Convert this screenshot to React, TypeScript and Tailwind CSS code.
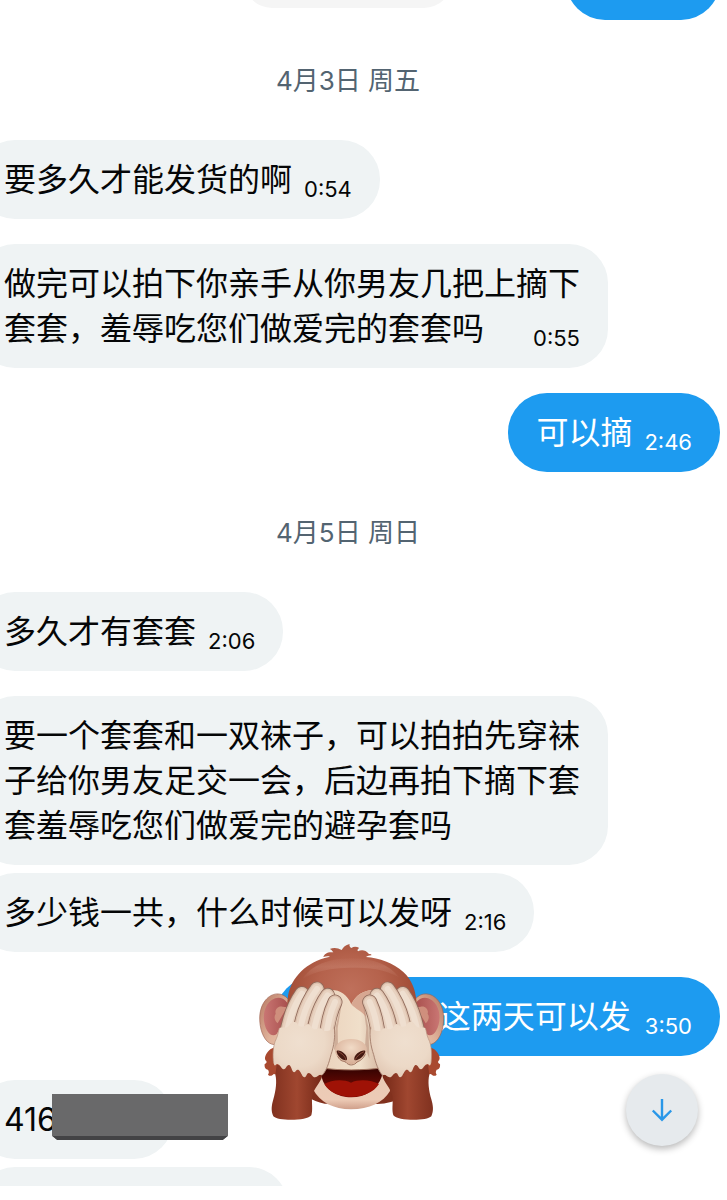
// App.tsx
import clsx from "clsx";
import type { ReactNode } from "react";

interface BubbleProps {
  mine?: boolean;
  time?: string;
  className?: string;
  children: ReactNode;
}

function Bubble({ mine, time, className, children }: BubbleProps) {
  return (
    <div className={clsx("relative flex", mine ? "justify-end" : "justify-start", className)}>
      <div
        className={clsx(
          "relative max-w-[632px] rounded-[39px] px-7 py-[17px] text-[32px] leading-[45px]",
          mine ? "bg-[#1d9bf0] text-white" : "bg-[#eff3f4] text-[#050607]"
        )}
      >
        {children}
        {time && (
          <time className="float-right ml-3 pt-5 text-[22px] leading-[25px]">{time}</time>
        )}
      </div>
    </div>
  );
}

function DateLabel({ children }: { children: ReactNode }) {
  return (
    <h2 className="flex h-[120px] items-center justify-center text-[26px] text-[#536471]">
      {children}
    </h2>
  );
}

const fingers = [
  "M189 191 C170 218 150 262 142 320",
  "M234 177 C212 206 190 250 182 310",
  "M266 196 C247 222 230 262 222 320",
  "M288 216 C274 246 264 280 262 330",
];

// one ear, hand and arm; the other side is its mirror
function MonkeySide() {
  return (
    <>
      <path d="M104 432 C100 438 92 440 87 434 C91 428 90 424 87 419 C78 418 76 410 77 402 C82 401 84 397 82 393 C74 388 78 372 94 358 L150 330 L150 440 Z" fill="#a9492f" />
      <path
        d="M113 404 C126 405 128 418 134 418 C143 417 141 402 151 405 C158 410 158 426 166 427 C172 426 171 415 180 421 C187 430 190 443 197 442 C203 440 203 427 210 429 C220 432 220 443 228 442 C238 437 239 430 250 436 C246 458 224 475 219 500 C218 520 222 540 217 556 C205 573 117 574 103 559 C95 542 98 525 103 508 C111 480 114 454 109 434 Z"
        fill="url(#arm)"
      />
      {fingers.map((d) => (
        <g key={d} fill="none" strokeLinecap="round">
          <path d={d} stroke="#8f6a5b" strokeWidth="45" />
          <path d={d} stroke="#dcc0ac" strokeWidth="40" />
          <path d={d} stroke="#e8d2c0" strokeWidth="32" />
          <path d={d} stroke="#efdfd0" strokeWidth="18" />
        </g>
      ))}
      <path
        d="M104 400 C101 378 101 347 112 326 C117 316 118 302 121 294 C128 288 141 300 152 284 C160 270 172 276 177 284 C184 294 196 290 206 282 C213 280 218 298 229 298 C238 296 244 290 254 302 C262 306 276 300 286 296 C289 320 285 348 276 374 C270 399 262 423 249 436 C240 431 237 441 228 442 C220 442 219 431 210 429 C203 428 203 440 197 442 C190 443 187 428 180 421 C172 416 171 426 166 427 C158 426 158 409 151 405 C142 403 143 417 134 418 C127 417 125 404 115 402 C110 401 108 414 104 400 Z"
        fill="url(#hand)"
      />
      <path d="M286 292 C289 320 285 348 276 374 C270 399 262 423 249 436" fill="none" stroke="#a98472" strokeWidth="3" />
      <path d="M104 400 C101 378 101 347 112 326 C117 316 118 302 121 294" fill="none" stroke="#b8937f" strokeWidth="2" />
    </>
  );
}

function MonkeyEar() {
  return (
    <>
      <path d="M148 208 C128 184 98 188 80 210 C62 231 58 264 66 298 C74 328 91 348 114 343 L150 300 Z" fill="url(#rim)" stroke="#9e6351" strokeWidth="2" />
      <path d="M146 220 C128 193 99 201 84 225 C70 249 72 281 85 303 C92 315 104 320 113 312 L145 255 Z" fill="url(#ear)" />
      <path d="M131 230 C118 226 106 238 110 251 C104 260 106 272 116 280 L144 232 Z" fill="#cf8f7d" />
    </>
  );
}

function Monkey({ className }: { className?: string }) {
  return (
    <svg viewBox="0 0 660 600" className={className} role="img" aria-label="See-no-evil monkey">
      <defs>
        <radialGradient id="head" gradientUnits="userSpaceOnUse" cx="335" cy="180" r="330">
          <stop offset="0" stopColor="#bf705b" />
          <stop offset=".3" stopColor="#b5624c" />
          <stop offset=".6" stopColor="#a04b34" />
          <stop offset="1" stopColor="#81311e" />
        </radialGradient>
        <linearGradient id="shine" x1="0" y1="0" x2="0" y2="1">
          <stop offset="0" stopColor="#c98673" stopOpacity=".1" />
          <stop offset=".4" stopColor="#c98673" stopOpacity=".45" />
          <stop offset="1" stopColor="#c98673" stopOpacity="0" />
        </linearGradient>
        <linearGradient id="arm" x1="0" y1="0" x2="1" y2="0">
          <stop offset="0" stopColor="#80311f" />
          <stop offset=".5" stopColor="#a04730" />
          <stop offset="1" stopColor="#752817" />
        </linearGradient>
        <radialGradient id="hand" gradientUnits="userSpaceOnUse" cx="182" cy="335" r="150">
          <stop offset="0" stopColor="#efdfcf" />
          <stop offset=".5" stopColor="#ecd9c7" />
          <stop offset=".8" stopColor="#e2c8b4" />
          <stop offset="1" stopColor="#cfac98" />
        </radialGradient>
        <linearGradient id="rim" x1="0" y1="0" x2="1" y2="1">
          <stop offset="0" stopColor="#b77761" />
          <stop offset=".6" stopColor="#dfb29a" />
          <stop offset="1" stopColor="#edc7ae" />
        </linearGradient>
        <linearGradient id="ear" x1="0" y1="0" x2="1" y2="0">
          <stop offset="0" stopColor="#c97673" />
          <stop offset="1" stopColor="#a9504e" />
        </linearGradient>
        <linearGradient id="face" x1="0" y1="0" x2="1" y2="0">
          <stop offset="0" stopColor="#d3ac94" />
          <stop offset=".25" stopColor="#ecd5bf" />
          <stop offset=".6" stopColor="#f0dfca" />
          <stop offset="1" stopColor="#c39c86" />
        </linearGradient>
        <linearGradient id="chin" x1="0" y1="0" x2="0" y2="1">
          <stop offset="0" stopColor="#e8cbb5" />
          <stop offset=".75" stopColor="#edcbb6" />
          <stop offset="1" stopColor="#cf9f8a" />
        </linearGradient>
        <linearGradient id="mouth" x1="0" y1="0" x2="0" y2="1">
          <stop offset="0" stopColor="#330301" />
          <stop offset=".5" stopColor="#5e0803" />
          <stop offset="1" stopColor="#7e0d05" />
        </linearGradient>
        <radialGradient id="nose" cx=".5" cy=".35" r=".65">
          <stop offset="0" stopColor="#f1dbc7" />
          <stop offset="1" stopColor="#d7ad95" />
        </radialGradient>
      </defs>

      <MonkeyEar />
      <g transform="matrix(-1 0 0 1 676 0)">
        <MonkeyEar />
      </g>

      {/* head with the tuft on top */}
      <path
        d="M146 208 C151 151 193 103 257 84 L273 80 C266 78 261 79 253 81 C256 72 265 65 283 67 C279 62 278 59 272 57 C284 52 296 53 308 60 C313 52 319 45 332 42 C330 48 333 51 337 54 C345 49 353 50 361 54 C356 57 354 61 357 64 C367 59 379 59 390 72 C396 72 398 74 397 76 C390 77 386 78 381 81 C421 84 463 99 493 126 C519 150 529 179 532 211 L555 410 C525 500 470 519 415 522 L257 521 C180 505 135 440 128 390 Z"
        fill="url(#head)"
      />
      <path d="M190 148 C218 104 270 86 335 85 C402 86 447 101 480 142 C433 116 391 113 335 113 C280 113 226 123 190 148 Z" fill="url(#shine)" />

      {/* face */}
      <path d="M337 223 C324 192 302 179 275 180 C235 182 210 220 211 270 L230 430 L445 430 L465 270 C470 217 441 182 402 180 C371 181 350 197 337 223 Z" fill="url(#face)" />
      <path d="M337 223 C350 197 371 181 402 180 L373 215 L382 262 C365 240 350 238 337 223 Z" fill="#d7a791" />
      <path d="M310 210 L290 290 L285 360 L297 350 L296 294 Z M370 210 L388 290 L391 386 L378 350 L382 294 Z" fill="#b78d79" opacity=".55" />

      {/* mouth and chin */}
      <path d="M235 420 C230 445 220 460 222 478 C242 517 284 538 336 538 C391 538 433 517 453 483 C454 456 442 444 434 420 Z" fill="url(#chin)" />
      <path d="M249 414 C304 422 373 421 428 414 C433 420 430 430 428 440 C415 478 379 502 337 502 C295 502 255 477 248 440 C245 428 246 420 249 414 Z" fill="url(#mouth)" />
      <path d="M256 462 C276 450 312 446 336 458 C360 446 399 450 420 462 C403 488 373 500 337 500 C302 500 270 487 256 462 Z" fill="#9f1206" />
      <path d="M249 414 C304 422 373 421 428 414" fill="none" stroke="#a27460" strokeWidth="3" />

      {/* nose */}
      <path d="M288 359 C290 338 313 326 337 327 C363 327 384 341 384 359 C383 378 364 389 354 395 C344 405 327 405 319 395 C304 391 287 378 288 359 Z" fill="url(#nose)" />
      <path d="M296 379 C306 397 312 391 321 397 C330 409 347 406 354 396 C363 392 371 389 379 373" fill="none" stroke="#9f715d" strokeWidth="3" />
      <path d="M293 363 C302 357 327 374 324 389 C317 397 292 378 293 363 Z M379 363 C371 357 343 373 346 389 C353 396 379 378 379 363 Z" fill="#451911" />
      <path d="M297 365 C309 370 319 380 321 390 M375 365 C363 370 352 380 349 389" stroke="#8a4b3b" strokeWidth="3" fill="none" />

      <MonkeySide />
      <g transform="matrix(-1 0 0 1 680 0)">
        <MonkeySide />
      </g>
    </svg>
  );
}

export default function App() {
  return (
    <main
      lang="zh-CN"
      className="overflow-hidden bg-white pr-[7px] font-['Inter','Noto_Sans_CJK_SC',sans-serif]"
    >
      <div className="-ml-6">
        {/* tail of the previous messages */}
        <div className="relative flex h-5 items-end justify-end overflow-hidden">
          <div className="h-[78px] w-[154px] shrink-0 rounded-[39px] bg-[#1d9bf0]" />
          <div className="absolute bottom-3 left-1/2 h-14 w-[208px] -translate-x-1/2 rounded-[28px] bg-[#f5f5f5]" />
        </div>

        <DateLabel>4月3日 周五</DateLabel>
        <Bubble time="0:54">要多久才能发货的啊</Bubble>
        <Bubble time="0:55" className="mt-[25px]">
          做完可以拍下你亲手从你男友几把上摘下套套，羞辱吃您们做爱完的套套吗
        </Bubble>
        <Bubble mine time="2:46" className="mt-[25px]">可以摘</Bubble>

        <DateLabel>4月5日 周日</DateLabel>
        <Bubble time="2:06">多久才有套套</Bubble>
        <Bubble className="mt-[25px]">
          要一个套套和一双袜子，可以拍拍先穿袜子给你男友足交一会，后边再拍下摘下套套羞辱吃您们做爱完的避孕套吗
        </Bubble>
        <Bubble time="2:16" className="mt-2">多少钱一共，什么时候可以发呀</Bubble>
        <Bubble mine time="3:50" className="z-10 mt-[25px]">
          <span className="pr-0.5 pl-[136px]">这两天可以发</span>
          <Monkey className="absolute -top-[47px] -left-9 h-[200px] w-[220px]" />
        </Bubble>

        <div className="relative mt-6">
          <Bubble>
            <span className="block w-[141px]">416</span>
            {/* redaction strip */}
            <span className="absolute top-[14px] left-[76px] h-[46px] w-[176px] border-b-4 border-[#434345] bg-[#69696a] [clip-path:polygon(0_0,100%_0,100%_91%,97%_100%,3%_100%,0_91%)]" />
          </Bubble>
          <button
            type="button"
            aria-label="Scroll to latest"
            className="absolute -top-[6px] right-[22px] flex size-[72px] items-center justify-center rounded-full bg-[#e6eaed] text-[#2997e8] shadow-[0_3px_7px_rgba(0,0,0,0.28)]"
          >
            <svg viewBox="0 0 24 24" className="size-6" fill="none" stroke="currentColor" strokeWidth="2.4">
              <path d="M12 1v21M2.800 12.500 12 21.700l9.200-9.200" />
            </svg>
          </button>
        </div>

        <div className="mt-2 h-[19px] overflow-hidden">
          <div className="h-[78px] w-[312px] rounded-[39px] bg-[#eff3f4]" />
        </div>
      </div>
    </main>
  );
}
